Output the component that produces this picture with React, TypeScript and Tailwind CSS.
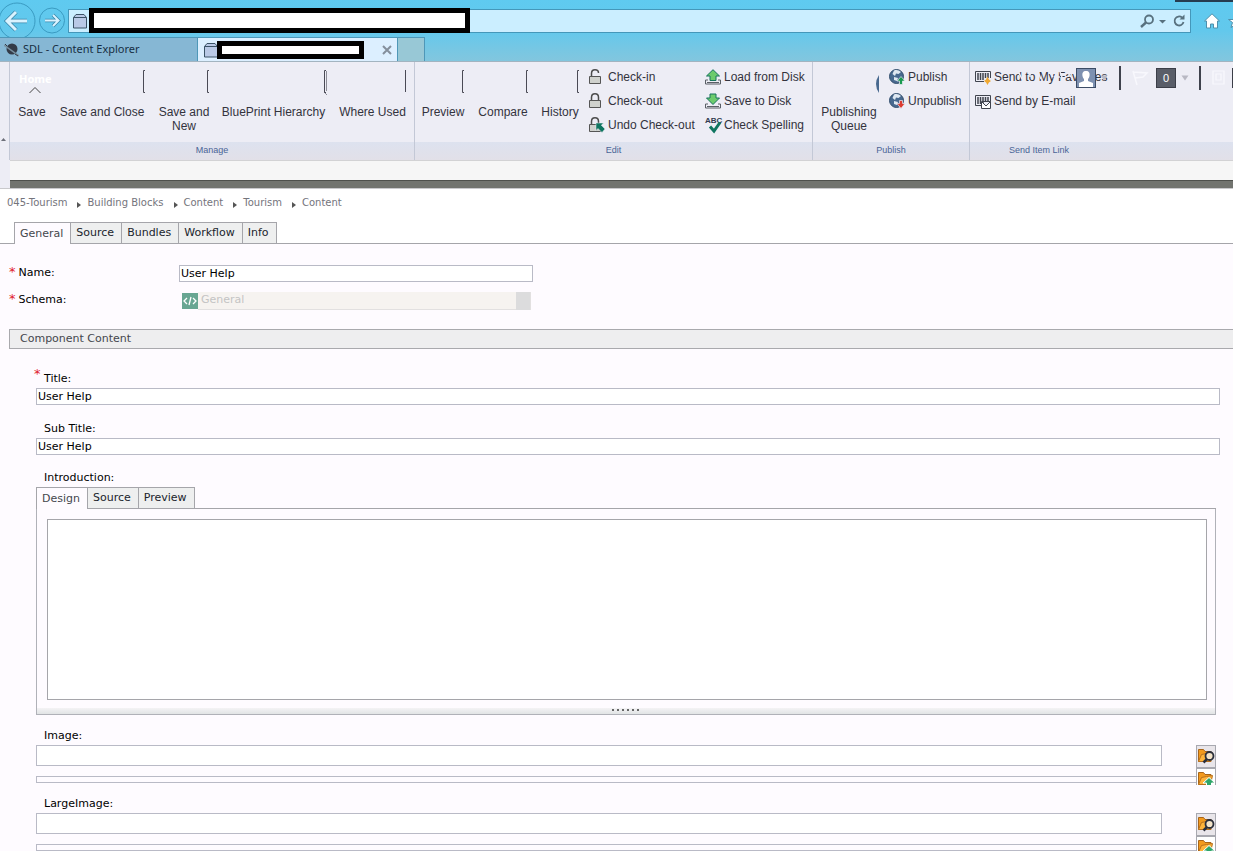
import React from 'react';

interface CommandProps {
  label: string;
  lines?: React.ReactNode;
  className?: string;
}

// Large ribbon command: a narrow icon strip with the caption below it
const Command: React.FC<CommandProps> = ({ label, lines, className = '' }) => (
  <button className={`flex flex-col items-end text-center text-[12px] leading-[14px] text-[#33333d] ${className}`}>
    <span className="h-10 flex items-start pt-1">{lines}</span>
    <span className="w-full">{label}</span>
  </button>
);

const SmallCommand: React.FC<{ label: string; icon: React.ReactNode }> = ({ label, icon }) => (
  <button className="flex h-6 items-center gap-[3px] whitespace-nowrap text-[12px] text-[#33333d]">
    <span className="w-4 h-4 shrink-0">{icon}</span>
    {label}
  </button>
);

const Group: React.FC<{ title: string; className?: string; titleClass?: string; children: React.ReactNode }> = ({
  title,
  className = '',
  titleClass = 'text-center',
  children,
}) => (
  <section className={`flex flex-col border-r border-[#c3c8d6] shrink-0 ${className}`}>
    <div className="flex h-20 pt-[3px]">{children}</div>
    <h2 className={`h-[18px] bg-linear-to-b from-[#dde2ef] to-[#e2e0e8] text-[9px] leading-[16px] text-[#4a6496] ${titleClass}`}>
      {title}
    </h2>
  </section>
);

const Bracket = ({ foot = false, thin = false }: { foot?: boolean; thin?: boolean }) => (
  <svg width="4" height="26" viewBox="0 0 4 26" fill="none" stroke="#4a4a55">
    <path d={thin ? 'M2.5 1v22' : 'M3 1.5H1.5v22H3'} />
    {foot && <path d="M1 23l3 3M3.5 2v20" strokeWidth=".6" />}
  </svg>
);

const Lock = ({ open = false, undo = false }: { open?: boolean; undo?: boolean }) => (
  <svg width="16" height="16" viewBox="0 0 16 16" fill="none">
    <path d={open ? 'M2.500 8V4.500C2.500 2 4 .8 6 .8s3.500 1.200 3.500 3.200' : 'M2.500 8V4.500C2.500 2 4 .8 6 .8s3.500 1.200 3.500 3.700V8'} stroke="#4c4c4c" strokeWidth="1.500" />
    <path d="M.5 7.500h11v7H.5z" fill="#cfd1cd" stroke="#555" />
    {undo && <path d="M7 6h7.500l-2.200 2.200L16 12l-3 3.500-4-4L7 13.500z" fill="#0f7560" stroke="#ededf5" strokeWidth=".5" />}
  </svg>
);

const Disk = ({ down = false }: { down?: boolean }) => (
  <svg width="16" height="16" viewBox="0 0 16 16">
    <path d="M3 11H.5v4h15v-4H13" fill="none" stroke="#5a5f66" />
    <path d="M2 13.500h12" stroke="#5a5f66" />
    <path
      d={down ? 'M5 1h6v4h3.500L8 11.500 1.500 5H5z' : 'M8 .7L14.500 7H11v4.500H5V7H1.500z'}
      fill="#6ccb6c"
      stroke="#16735c"
    />
  </svg>
);

const Spelling = () => (
  <svg width="16" height="16" viewBox="0 0 16 16" className="overflow-visible">
    <text x="0" y="6" fontSize="8" fontWeight="bold" fontFamily="Liberation Sans, sans-serif" fill="#2f3a4f">ABC</text>
    <path d="M5 9.500l4 4.500 6-8.500" fill="none" stroke="#0f7560" strokeWidth="3" />
  </svg>
);

const Globe = ({ color, down = false }: { color: string; down?: boolean }) => (
  <svg width="16" height="16" viewBox="0 0 16 16">
    <circle cx="7.500" cy="7.500" r="7" fill="#48698f" stroke="#35506f" />
    <path d="M5 1.500c3-1 5 0 7 1.500L9.500 5 7 4.500 6 7 3.500 5zM5 8l4 1-1 3-3-1z" fill="#dfe8f1" />
    <path
      d={down ? 'M10.500 7.500h3v3H16L12 15.500 8 10.500h2.500z' : 'M12 7.500l4 4.500h-2.500v3.500h-3V12H8z'}
      fill={color}
      stroke="#ededf5"
      strokeWidth=".7"
    />
  </svg>
);

const Barcode = ({ mail = false }: { mail?: boolean }) => (
  <svg width="16" height="16" viewBox="0 0 16 16" fill="none">
    <path d="M9 12.500H.5v-10h15V9" stroke="#40444e" />
    <path d="M3 4v7M5.500 4v7M8 4v7M10.500 4v5M13 4v5" stroke="#40444e" strokeWidth="1.500" />
    {mail ? (
      <path d="M6.500 8.500h9v7h-9zM7 9l4 4 4-4" fill="#fff" stroke="#40444e" />
    ) : (
      <path d="M12.500 7.500l1.400 3L16 12l-2.100 1.500-1.400 2.500-1.400-2.500L9 12l2.100-1.500z" fill="#f0a830" />
    )}
  </svg>
);

const FolderIcon = ({ upload = false }: { upload?: boolean }) => (
  <svg width="18" height="20" viewBox="0 0 18 20">
    <path d="M1.500 14.500v-12h5l1.500 2h6v10z" fill="#f39a1d" stroke="#a8641a" />
    <path d="M1.500 14.500l3-7 5-1 6-1-2 9z" fill="#ffb43b" stroke="#b8701c" />
    {upload ? (
      <path d="M12 7.500l6 5.500h-3.500v6h-5v-6H6z" fill="#2fa56a" stroke="#fff" />
    ) : (
      <>
        <circle cx="12.500" cy="9" r="4" fill="#f3e3c8" stroke="#2b2f3d" strokeWidth="1.800" />
        <path d="M10 12L6.500 15.500" stroke="#2b2f3d" strokeWidth="2.500" />
      </>
    )}
  </svg>
);

const PageIcon = () => (
  <svg width="16" height="16" viewBox="0 0 16 16" className="shrink-0">
    <path d="M1.500 15V4.500L4 1.500h8l2.500 3V15z" fill="#b9c9e6" stroke="#3a5266" />
    <path d="M1.500 4.500h13" stroke="#3a5266" />
  </svg>
);

const BrowserChrome = () => (
  <header className="bg-linear-to-b from-[#5fcaf0] via-[#62c8ec] to-[#82c6de] border-b border-[#a3b4c0]">
    <div className="relative flex h-[37px] items-center overflow-hidden pt-1">
      <div className="absolute right-0 top-0 h-[2px] w-[58px] bg-[#263c50]" />
      <svg width="68" height="37" viewBox="0 0 68 37" className="-mt-1 shrink-0" fill="none">
        <circle cx="17" cy="21" r="18" stroke="#3a9bc2" />
        <circle cx="52" cy="20.500" r="12.500" stroke="#3a9bc2" />
        <path d="M27 21H8M16 12l-9 9 9 9" stroke="#3b87aa" strokeWidth="4.500" />
        <path d="M27 21H8M16 12l-9 9 9 9" stroke="#d9f3ff" strokeWidth="3" />
        <path d="M45 20.500h13M53 15l5.500 5.500L53 26" stroke="#3b87aa" strokeWidth="3.500" />
        <path d="M45 20.500h13M53 15l5.500 5.500L53 26" stroke="#d9f3ff" strokeWidth="2" />
      </svg>
      <div className="flex h-6 flex-1 items-center border border-[#4497ba] bg-[#cbeeff] pl-[3px]">
        <PageIcon />
        <input aria-label="Address" className="ml-px h-[25px] w-[381px] border-5 border-black bg-white" />
        <svg width="48" height="16" viewBox="0 0 48 16" fill="none" className="ml-auto mr-1">
          <circle cx="11" cy="6.500" r="4" stroke="#58717f" strokeWidth="1.800" />
          <path d="M8 9.500L3 14" stroke="#58717f" strokeWidth="2.400" />
          <path d="M21 7h7l-3.500 3.500z" fill="#58717f" />
          <path d="M44 4.500A4.500 4.500 0 1 0 45.500 9" stroke="#58717f" strokeWidth="1.800" />
          <path d="M46.500 1.500v5h-5z" fill="#58717f" />
        </svg>
      </div>
      <svg width="42" height="16" viewBox="0 0 42 16" className="shrink-0">
        <path d="M21 .8l7.500 7.200h-2v7h-4v-4h-3v4h-4V8h-2z" fill="#fff" stroke="#4f90ac" />
        <path d="M45 2l2 4.500h5l-4 3 2 5-5-3-5 3 1.500-5-4-3h5z" fill="#fff" stroke="#4f90ac" />
      </svg>
    </div>
    <nav className="flex h-6">
      <button className="flex w-[197px] items-center gap-1 border-t border-[#4e97b8] bg-[#86b7d4] pl-1 font-['Noto_Sans',sans-serif] text-[11px] text-[#172f43]">
        <svg width="15" height="16" viewBox="0 0 15 16">
          <circle cx="8" cy="7" r="5.500" fill="#333b48" />
          <path d="M0 3l15 11" stroke="#78909f" strokeWidth="1.500" />
          <path d="M1 2l2 2M11 12l3 2" stroke="#333b48" />
        </svg>
        SDL - Content Explorer
      </button>
      <div className="flex w-[201px] items-center border-x border-t border-[#4e97b8] bg-[#dcefff] pl-[5px]">
        <PageIcon />
        <input aria-label="Tab title" className="-ml-[2px] h-[18px] w-[147px] border-5 border-black bg-white" />
        <button aria-label="Close tab" className="ml-auto mr-[5px]">
          <svg width="10" height="10" viewBox="0 0 10 10" stroke="#848f9c" strokeWidth="2">
            <path d="M1 1l8 8M9 1L1 9" />
          </svg>
        </button>
      </div>
      <button aria-label="New tab" className="w-[27px] border-r border-t border-[#4e97b8] bg-[#98c8d6]" />
    </nav>
  </header>
);

const Caret = () => (
  <svg width="8" height="6" viewBox="0 0 8 6" className="shrink-0">
    <path d="M.5.5h7L4 5.500z" fill="#b8b8c3" />
  </svg>
);

// User menu and counters that float above the ribbon
const GlobalBar = () => (
  <div className="absolute right-0 top-1 flex h-6 items-center">
    <svg width="60" height="16" viewBox="0 0 60 16" fill="none" stroke="#ededf5" strokeWidth="1.500">
      <path d="M3 3l3 6M14 2v5M22 2l3 7M34 2l3 5M38 7h6M44 2l3 8M52 3l4 5" />
    </svg>
    <button aria-label="User" className="h-5 w-5 border border-[#3c4c66] bg-[#7d90b0]">
      <svg width="18" height="18" viewBox="0 0 18 18" fill="#fff">
        <path d="M9 2c-3 0-4 2-3.500 5 .3 1.500 1 2.500 1.500 3v2l-5 2v4h14v-4l-5-2v-2c.5-.5 1.200-1.500 1.500-3C13 4 12 2 9 2z" />
      </svg>
    </button>
    <span className="flex w-[23px] pl-1"><Caret /></span>
    <span className="h-6 w-[2px] bg-[#3f424d]" />
    <svg width="35" height="20" viewBox="0 0 35 20" fill="none" stroke="#f8f8fd" strokeWidth="1.500">
      <path d="M12 3l4 14M12 4l14 1-4 4-8 1" />
    </svg>
    <button className="h-5 w-5 border border-[#3b3e48] bg-[#595d68] font-['Liberation_Sans',sans-serif] text-[11px] text-white">0</button>
    <span className="flex w-[23px] pl-[5px]"><Caret /></span>
    <span className="h-6 w-[2px] bg-[#3f424d]" />
    <svg width="31" height="20" viewBox="0 0 31 20" fill="none" stroke="#f8f8fd" strokeWidth="1.200">
      <path d="M12 3h11v13H12zM15 6h5v6h-5z" />
    </svg>
    <span className="h-5 w-px bg-[#3b3e48]" />
  </div>
);

const Ribbon = () => (
  <div className="flex bg-[#ededf5]">
    <div className="flex w-[9px] shrink-0 items-center text-[#6d707a]">
      <svg width="7" height="5" viewBox="0 0 7 5" className="mt-7">
        <path d="M1 4h5L3.500 1z" fill="currentColor" />
      </svg>
    </div>
    <div className="min-w-0 flex-1">
      <div className="relative flex font-['Liberation_Sans',sans-serif]">
        <span className="absolute left-[10px] top-[10px] font-['Noto_Sans',sans-serif] text-[11px] leading-[13px] font-bold text-white">Home</span>
        <svg width="12" height="8" viewBox="0 0 12 8" fill="none" stroke="#444" className="absolute left-5 top-6">
          <path d="M.5 7L6 1.500 11.500 7" />
        </svg>
        <Group title="Manage" className="w-[406px] border-l">
          <Command label="Save" className="ml-2 w-[28px]" />
          <Command label="Save and Close" lines={<Bracket />} className="ml-3 w-[88px]" />
          <Command label="Save and New" lines={<Bracket />} className="ml-3 w-[52px]" />
          <Command label="BluePrint Hierarchy" lines={<Bracket foot />} className="ml-[10px] w-[107px]" />
          <Command label="Where Used" lines={<Bracket thin />} className="ml-[11px] w-[69px]" />
        </Group>
        <Group title="Edit" className="w-[398px]">
          <Command label="Preview" lines={<Bracket />} className="ml-[6px] w-[44px]" />
          <Command label="Compare" lines={<Bracket />} className="ml-3 w-[52px]" />
          <Command label="History" lines={<Bracket />} className="ml-[11px] w-[40px]" />
          <div className="ml-[9px] flex w-[116px] flex-col">
            <SmallCommand label="Check-in" icon={<Lock open />} />
            <SmallCommand label="Check-out" icon={<Lock />} />
            <SmallCommand label="Undo Check-out" icon={<Lock undo />} />
          </div>
          <div className="flex flex-col">
            <SmallCommand label="Load from Disk" icon={<Disk />} />
            <SmallCommand label="Save to Disk" icon={<Disk down />} />
            <SmallCommand label="Check Spelling" icon={<Spelling />} />
          </div>
        </Group>
        <Group title="Publish" className="w-[157px]">
          <Command
            label="Publishing Queue"
            className="ml-[6px] w-[60px]"
            lines={
              <svg width="4" height="26" viewBox="0 0 4 26">
                <path d="M4 6Q-2 15 4 24z" fill="#48698f" />
              </svg>
            }
          />
          <div className="ml-[10px] flex flex-col">
            <SmallCommand label="Publish" icon={<Globe color="#199a50" />} />
            <SmallCommand label="Unpublish" icon={<Globe color="#dc3b30" down />} />
          </div>
        </Group>
        <Group title="Send Item Link" className="flex-1 border-r-0" titleClass="pl-[39px]">
          <div className="ml-[5px] flex flex-col">
            <SmallCommand label="Send to My Favorites" icon={<Barcode />} />
            <SmallCommand label="Send by E-mail" icon={<Barcode mail />} />
          </div>
        </Group>
        <GlobalBar />
      </div>
      <div className="ml-px h-5 border-t border-[#d2d2d4] bg-[#f6f6f6]" />
      <div className="ml-px h-2 border-t border-[#4e504c] bg-[#72746f]" />
    </div>
  </div>
);

const Tabs: React.FC<{ items: string[]; className?: string }> = ({ items, className = '' }) => (
  <div role="tablist" className={`relative flex border-b border-[#a5a5aa] ${className}`}>
    {items.map((item, i) => (
      <button
        key={item}
        role="tab"
        aria-selected={i === 0}
        className={`-mb-px h-[22px] border-r border-t border-[#a5a5aa] pl-[5px] pr-[7px] pt-px text-[11px] ${
          i === 0 ? 'border-l bg-[#fefbff] text-[#44474d]' : 'border-b bg-[#eeefef] text-[#20242c]'
        }`}
      >
        {item}
      </button>
    ))}
  </div>
);

const Required = () => <span className="text-[13px] leading-[13px] text-[#e0202c]">*</span>;

const TextField: React.FC<{ id: string; label: string; required?: boolean }> = ({ id, label, required }) => (
  <div className="mb-[15px]">
    <div className="relative flex h-[18px] items-center pl-2">
      {required && <span className="absolute -left-[2px] -top-[3px]"><Required /></span>}
      <label htmlFor={id}>{label}</label>
    </div>
    <input id={id} defaultValue="User Help" className="block h-[17px] w-full border border-[#b9bac6] bg-white px-px" />
  </div>
);

const ImageField: React.FC<{ id: string; label: string }> = ({ id, label }) => (
  <div className="mb-[10px] mr-1">
    <label htmlFor={id} className="flex h-[18px] items-center pl-2">{label}</label>
    <div className="flex h-10 items-start overflow-hidden">
      <div className="flex-1">
        <input id={id} className="block h-[21px] w-[calc(100%-34px)] border border-[#b9bac6] bg-white" />
        <div className="mt-[10px] h-[7px] border border-r-0 border-[#b9bac6]" />
      </div>
      <div className="w-5">
        <button aria-label={`Browse ${label}`} className="block h-[23px] w-5 border border-[#a8a8b0] bg-[#e9e5ea]">
          <FolderIcon />
        </button>
        <button aria-label={`Upload ${label}`} className="block h-[23px] w-5 border border-[#a8a8b0] bg-white">
          <FolderIcon upload />
        </button>
      </div>
    </div>
  </div>
);

const crumbs = ['045-Tourism', 'Building Blocks', 'Content', 'Tourism', 'Content'];

const App: React.FC = () => (
  <div className="flex h-screen flex-col overflow-hidden bg-[#fefbff] font-['DejaVu_Sans',sans-serif] text-[11px] text-black">
    <BrowserChrome />
    <Ribbon />
    <div className="border-t border-[#c9c9cc] bg-white">
      <nav className="flex h-[33px] items-start pl-[7px] pt-[6px] text-[10px] leading-[16px]">
        {crumbs.map((crumb, i) => (
          <React.Fragment key={i}>
            {i > 0 && (
              <svg width="4" height="6" viewBox="0 0 4 6" className="ml-[10px] mr-[6px] mt-[7px]">
                <path d="M0 0l4 3-4 3z" fill="#555" />
              </svg>
            )}
            <a href="#" className="text-[#74747c]">{crumb}</a>
          </React.Fragment>
        ))}
      </nav>
      <Tabs items={['General', 'Source', 'Bundles', 'Workflow', 'Info']} className="pl-[14px]" />
    </div>

    <main className="min-h-0 flex-1 overflow-hidden pl-[9px]">
      <div className="mt-[21px] flex h-[17px] items-center">
        <label htmlFor="name" className="flex w-[170px] gap-[3px]"><Required />Name:</label>
        <input id="name" defaultValue="User Help" className="h-[17px] w-[354px] border border-[#b9bac6] bg-white px-px" />
      </div>
      <div className="mt-[9px] flex h-[19px] items-center">
        <label htmlFor="schema" className="flex w-[173px] gap-[3px]"><Required />Schema:</label>
        <svg width="16" height="16" viewBox="0 0 16 16" className="shrink-0" fill="none">
          <path d="M0 0h16v16H0z" fill="#68a692" />
          <path d="M5 5L2 8l3 3M11 5l3 3-3 3M9 4l-2 8" stroke="#fff" strokeWidth="1.300" />
        </svg>
        <div className="flex h-[18px] w-[333px] border-b border-r border-[#e2e0e0] bg-[#f6f3f0]">
          <select id="schema" disabled className="flex-1 appearance-none pl-[3px] text-[#c4c4c4] opacity-100">
            <option>General</option>
          </select>
          <span className="h-[18px] w-[14px] bg-[#dcdcdd]" />
        </div>
      </div>

      <h3 className="mt-[19px] flex h-5 items-center border border-r-0 border-[#a9a9ad] bg-[#eeeeef] pl-[10px] pt-px text-[11px] text-[#44474d]">
        Component Content
      </h3>

      <div className="ml-[27px] mr-[13px] mt-[21px]">
        <TextField id="title" label="Title:" required />
        <TextField id="subtitle" label="Sub Title:" />
        <label htmlFor="intro" className="flex h-[17px] items-center pl-2">Introduction:</label>
        <div className="mr-1">
          <Tabs items={['Design', 'Source', 'Preview']} />
          <div className="border border-t-0 border-[#b0b1b8]">
            <div className="pl-[10px] pr-2 pt-[10px]">
              <textarea id="intro" className="block h-[181px] w-full resize-none border border-[#a5a5aa] bg-white" />
            </div>
            <div className="mt-2 flex h-[6px] items-start justify-center bg-linear-to-b from-[#f4f3f5] to-[#e1e4e5]">
              <svg width="28" height="3" viewBox="0 0 28 3" fill="#666">
                <path d="M0 1h2v2H0zM5 1h2v2H5zM10 1h2v2h-2zM15 1h2v2h-2zM20 1h2v2h-2zM25 1h2v2h-2z" />
              </svg>
            </div>
          </div>
        </div>
        <div className="mt-3">
          <ImageField id="image" label="Image:" />
          <ImageField id="large-image" label="LargeImage:" />
        </div>
      </div>
    </main>
  </div>
);

export default App;
